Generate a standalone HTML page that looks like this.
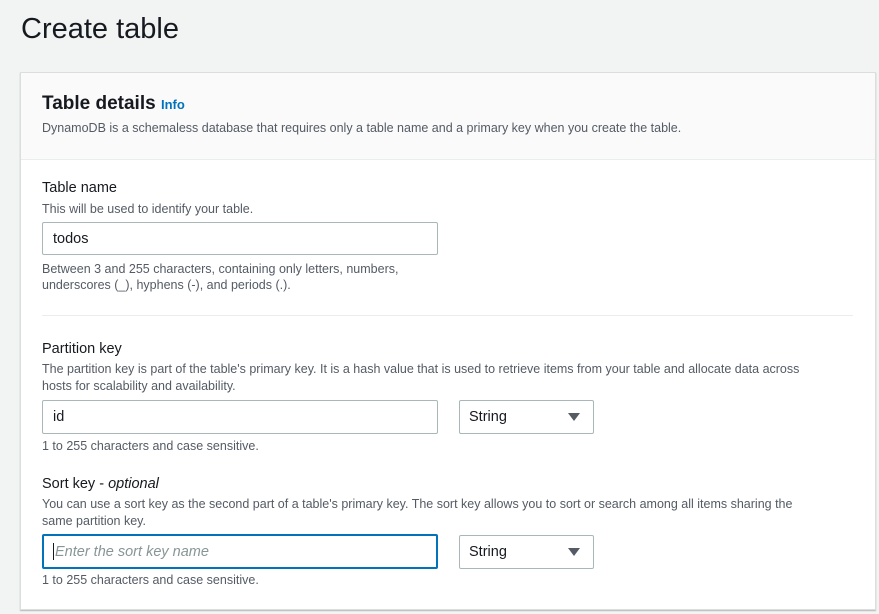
<!DOCTYPE html>
<html><head><style>
*{margin:0;padding:0;box-sizing:border-box}
body{width:879px;height:614px;overflow:hidden;background:#f2f3f3;font-family:"Liberation Sans",sans-serif;color:#16191f;position:relative}
.a{position:absolute;white-space:nowrap}
.card{position:absolute;left:20px;top:72px;width:856px;height:538px;background:#fff;border:1px solid #dcdddd;box-shadow:0 1px 1px rgba(0,0,0,.25)}
.hd{position:absolute;left:0;top:0;right:0;height:87px;background:#fafafa;border-bottom:1px solid #eaeded}
.lbl{font-size:14.5px;color:#16191f}
.hint{font-size:12.5px;color:#545b64}
.inp{position:absolute;border:1px solid #aab7b8;border-radius:2px;background:#fff;font-size:14.5px;padding-left:10px;display:flex;align-items:center}
.sel{position:absolute;border:1px solid #aab7b8;border-radius:2px;background:#fff;font-size:14.5px;padding-left:9px;display:flex;align-items:center}
.sel:after{content:"";position:absolute;right:13px;top:12px;border-left:6px solid transparent;border-right:6px solid transparent;border-top:8px solid #545b64}
</style></head><body>
<div class="a" style="left:21px;top:13px;font-size:29px">Create table</div>
<div class="card"><div class="hd"></div></div>
<div class="a" style="left:42px;top:93px;font-size:19px;font-weight:bold">Table details <span style="font-size:13px;color:#0073bb">Info</span></div>
<div class="a hint" style="left:42px;top:121px;color:#545b64">DynamoDB is a schemaless database that requires only a table name and a primary key when you create the table.</div>
<div class="a lbl" style="left:42px;top:180px">Table name</div>
<div class="a hint" style="left:42px;top:202px">This will be used to identify your table.</div>
<div class="inp" style="left:42px;top:222px;width:396px;height:33px">todos</div>
<div class="a hint" style="left:42px;top:262px">Between 3 and 255 characters, containing only letters, numbers,</div>
<div class="a hint" style="left:42px;top:278px">underscores (_), hyphens (-), and periods (.).</div>
<div class="a" style="left:42px;top:315px;width:811px;height:1px;background:#eaeded"></div>
<div class="a lbl" style="left:42px;top:341px">Partition key</div>
<div class="a hint" style="left:42px;top:362px">The partition key is part of the table's primary key. It is a hash value that is used to retrieve items from your table and allocate data across</div>
<div class="a hint" style="left:42px;top:379px">hosts for scalability and availability.</div>
<div class="inp" style="left:42px;top:400px;width:396px;height:34px">id</div>
<div class="sel" style="left:459px;top:400px;width:135px;height:34px">String</div>
<div class="a hint" style="left:42px;top:439px">1 to 255 characters and case sensitive.</div>
<div class="a lbl" style="left:42px;top:476px">Sort key - <i>optional</i></div>
<div class="a hint" style="left:42px;top:497px">You can use a sort key as the second part of a table's primary key. The sort key allows you to sort or search among all items sharing the</div>
<div class="a hint" style="left:42px;top:514px">same partition key.</div>
<div class="inp" style="left:42px;top:534px;width:396px;height:35px;border:2px solid #0073bb;padding-left:9px;color:#879596;font-style:italic"><span style="display:inline-block;width:1px;height:17px;background:#16191f;margin-right:1px"></span>Enter the sort key name</div>
<div class="sel" style="left:459px;top:535px;width:135px;height:34px">String</div>
<div class="a hint" style="left:42px;top:573px">1 to 255 characters and case sensitive.</div>
</body></html>
